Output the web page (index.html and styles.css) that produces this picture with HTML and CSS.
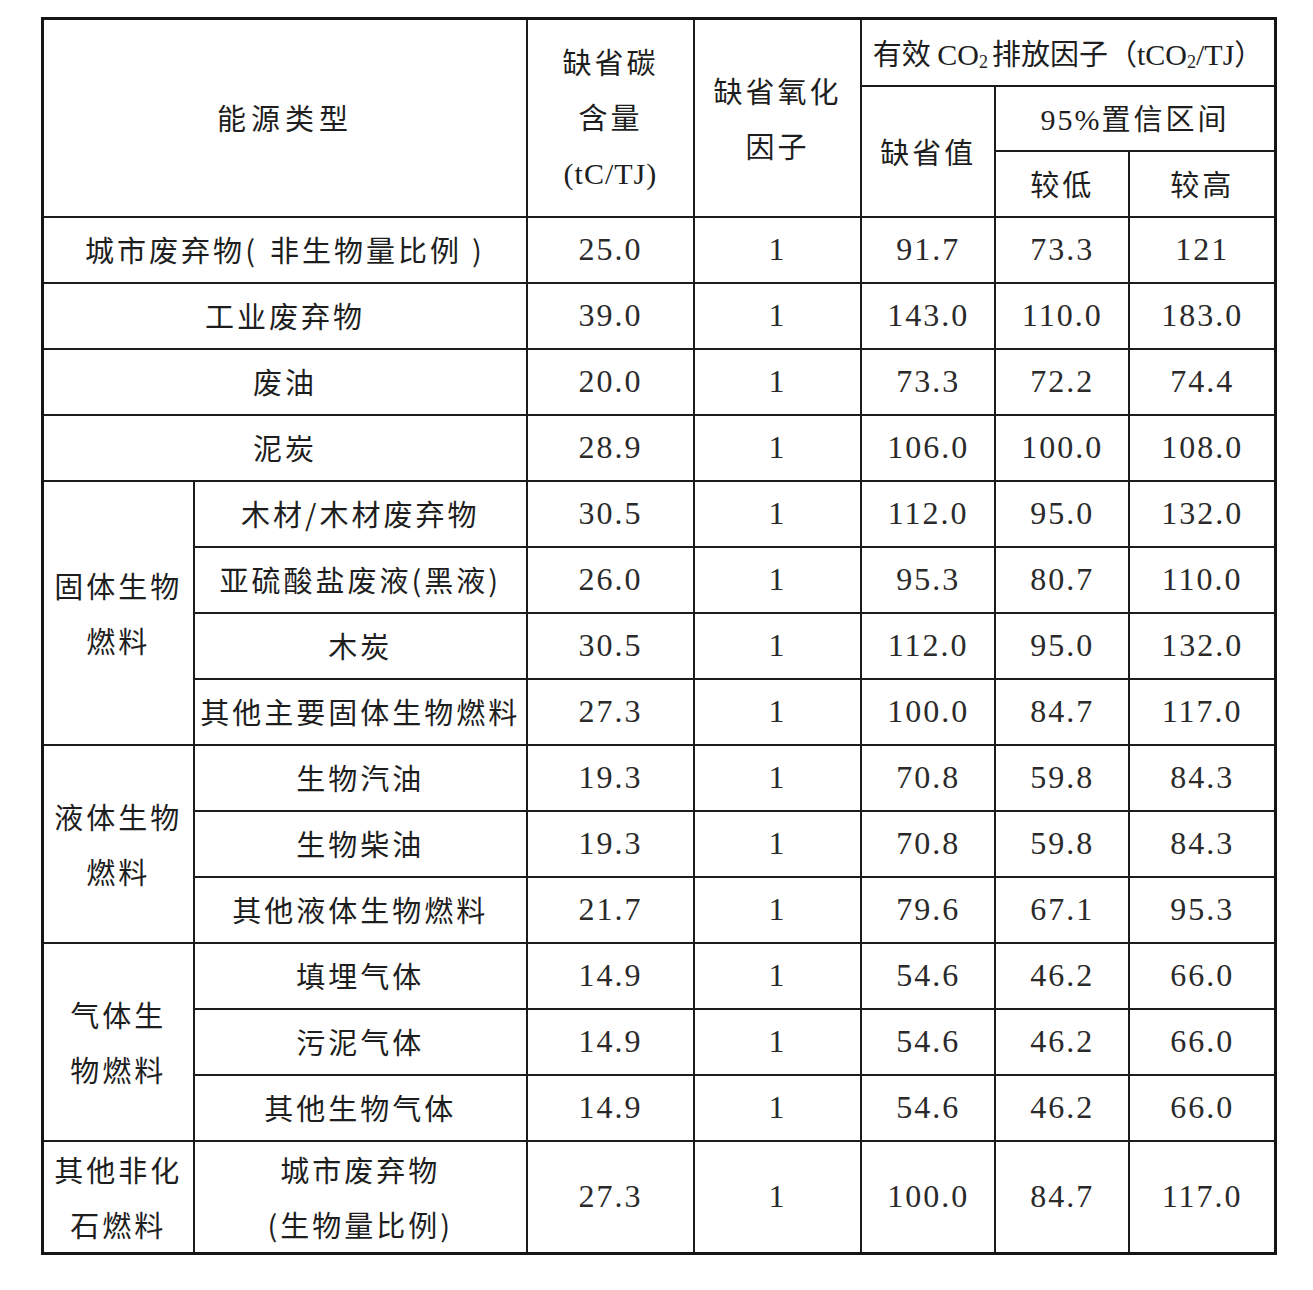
FILE: index.html
```html
<!DOCTYPE html>
<html lang="zh-CN">
<head>
<meta charset="utf-8">
<title>有效CO2排放因子</title>
<link rel="stylesheet" href="styles.css">
</head>
<body>
<table class="factors">
  <colgroup>
    <col class="c-grp"><col class="c-name"><col class="c-carbon"><col class="c-oxid"><col class="c-def"><col class="c-low"><col class="c-high">
  </colgroup>
  <thead>
    <tr class="h1">
      <th colspan="2" rowspan="3" class="wide">能源类型</th>
      <th rowspan="3" class="stack">缺省碳<br>含量<br><span class="num unit">(tC/TJ)</span></th>
      <th rowspan="3" class="stack">缺省氧化<br>因子</th>
      <th colspan="3" class="co2">有效 <span class="num co">CO<sub>2</sub></span>排放因子（<span class="num">tCO<sub>2</sub>/TJ</span>）</th>
    </tr>
    <tr class="h2">
      <th rowspan="2">缺省值</th>
      <th colspan="2"><span class="num pct">95%</span>置信区间</th>
    </tr>
    <tr class="h3">
      <th>较低</th>
      <th>较高</th>
    </tr>
  </thead>
  <tbody>
    <tr><td colspan="2">城市废弃物<span class="paren-l">(</span>非生物量比例<span class="paren-r">)</span></td><td class="num">25.0</td><td class="num">1</td><td class="num">91.7</td><td class="num">73.3</td><td class="num">121</td></tr>
    <tr><td colspan="2">工业废弃物</td><td class="num">39.0</td><td class="num">1</td><td class="num">143.0</td><td class="num">110.0</td><td class="num">183.0</td></tr>
    <tr><td colspan="2">废油</td><td class="num">20.0</td><td class="num">1</td><td class="num">73.3</td><td class="num">72.2</td><td class="num">74.4</td></tr>
    <tr><td colspan="2">泥炭</td><td class="num">28.9</td><td class="num">1</td><td class="num">106.0</td><td class="num">100.0</td><td class="num">108.0</td></tr>
    <tr><td rowspan="4" class="grp">固体生物<br>燃料</td><td>木材/木材废弃物</td><td class="num">30.5</td><td class="num">1</td><td class="num">112.0</td><td class="num">95.0</td><td class="num">132.0</td></tr>
    <tr><td>亚硫酸盐废液(黑液)</td><td class="num">26.0</td><td class="num">1</td><td class="num">95.3</td><td class="num">80.7</td><td class="num">110.0</td></tr>
    <tr><td>木炭</td><td class="num">30.5</td><td class="num">1</td><td class="num">112.0</td><td class="num">95.0</td><td class="num">132.0</td></tr>
    <tr><td>其他主要固体生物燃料</td><td class="num">27.3</td><td class="num">1</td><td class="num">100.0</td><td class="num">84.7</td><td class="num">117.0</td></tr>
    <tr><td rowspan="3" class="grp">液体生物<br>燃料</td><td>生物汽油</td><td class="num">19.3</td><td class="num">1</td><td class="num">70.8</td><td class="num">59.8</td><td class="num">84.3</td></tr>
    <tr><td>生物柴油</td><td class="num">19.3</td><td class="num">1</td><td class="num">70.8</td><td class="num">59.8</td><td class="num">84.3</td></tr>
    <tr><td>其他液体生物燃料</td><td class="num">21.7</td><td class="num">1</td><td class="num">79.6</td><td class="num">67.1</td><td class="num">95.3</td></tr>
    <tr><td rowspan="3" class="grp">气体生<br>物燃料</td><td>填埋气体</td><td class="num">14.9</td><td class="num">1</td><td class="num">54.6</td><td class="num">46.2</td><td class="num">66.0</td></tr>
    <tr><td>污泥气体</td><td class="num">14.9</td><td class="num">1</td><td class="num">54.6</td><td class="num">46.2</td><td class="num">66.0</td></tr>
    <tr><td>其他生物气体</td><td class="num">14.9</td><td class="num">1</td><td class="num">54.6</td><td class="num">46.2</td><td class="num">66.0</td></tr>
    <tr class="last"><td class="grp">其他非化<br>石燃料</td><td class="grp">城市废弃物<br>(生物量比例)</td><td class="num">27.3</td><td class="num">1</td><td class="num">100.0</td><td class="num">84.7</td><td class="num">117.0</td></tr>
  </tbody>
</table>
</body>
</html>
```

FILE: styles.css
```css
html, body {
  margin: 0;
  padding: 0;
  background: #ffffff;
}

body {
  padding: 17px 0 0 41px;
  font-family: "Noto Sans CJK SC", "Liberation Sans", sans-serif;
  color: #1e1e1e;
}

.factors {
  border-collapse: collapse;
  table-layout: fixed;
  width: 1236px;
  border: 3px solid #151515;
}

.c-grp { width: 151px; }
.c-name { width: 333px; }
.c-carbon { width: 167px; }
.c-oxid { width: 167px; }
.c-def { width: 134px; }
.c-low { width: 134px; }
.c-high { width: 146px; }

.factors th,
.factors td {
  border: 2px solid #1c1c1c;
  padding: 0;
  text-align: center;
  vertical-align: middle;
  font-size: 29px;
  font-weight: 400;
  letter-spacing: 3px;
  line-height: 55px;
  white-space: nowrap;
  overflow: visible;
}

.factors tbody tr { height: 66px; }
.factors tr.h1 { height: 67px; }
.factors tr.h2 { height: 65px; }
.factors tr.h3 { height: 66px; }
.factors tbody tr.last { height: 111px; }

.factors .wide { letter-spacing: 5px; }

.factors .co2 {
  letter-spacing: 0;
  font-size: 29px;
  padding-top: 2px;
}

.factors .co2 .num {
  letter-spacing: 0;
  font-size: 30px;
}

.factors .co2 .co { margin-right: 4px; }

.num {
  font-family: "Liberation Serif", "Noto Sans CJK SC", serif;
  font-weight: 400;
}

.factors .pct {
  font-size: 30px;
  letter-spacing: 2px;
}

.factors td.num {
  font-family: "Liberation Serif", serif;
  font-size: 32px;
  letter-spacing: 2px;
  font-weight: 400;
  color: #2a2a2a;
}

.factors .unit {
  font-size: 30px;
  letter-spacing: 1px;
}

.paren-l { margin-right: 12px; }
.paren-r { margin-left: 10px; }

sub {
  font-size: 0.6em;
  vertical-align: -0.15em;
  line-height: 0;
}
```
